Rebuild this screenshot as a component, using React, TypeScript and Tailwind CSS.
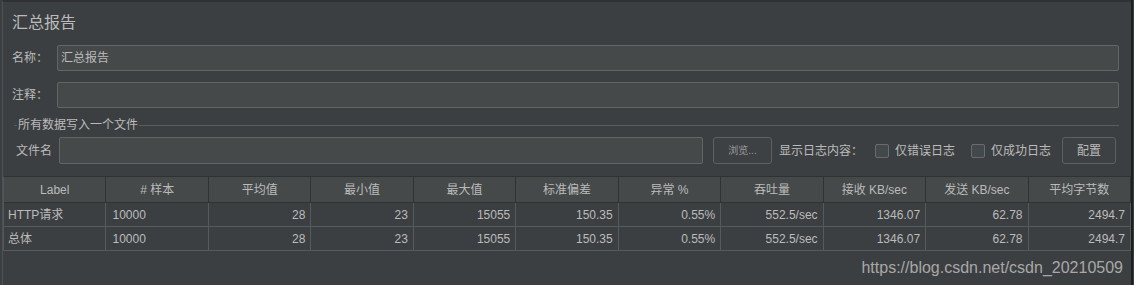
import React from 'react';

const headers = ['Label', '# 样本', '平均值', '最小值', '最大值', '标准偏差', '异常 %', '吞吐量', '接收 KB/sec', '发送 KB/sec', '平均字节数'];

const rows = [
  ['HTTP请求', '10000', '28', '23', '15055', '150.35', '0.55%', '552.5/sec', '1346.07', '62.78', '2494.7'],
  ['总体', '10000', '28', '23', '15055', '150.35', '0.55%', '552.5/sec', '1346.07', '62.78', '2494.7'],
];

function TextRow({ label, value }: { label: string; value?: string }) {
  return (
    <div className="flex h-[26px] items-center pl-[9px] pr-[12px]">
      <span className="w-[45px] shrink-0">{label}</span>
      <div className="flex h-full flex-1 items-center rounded-[2px] border border-[#646464] bg-[#45494a] px-[3px]">
        {value}
      </div>
    </div>
  );
}

function Checkbox() {
  return <span className="block h-[14px] w-[14px] shrink-0 rounded-[2px] border border-[#6b6b6b] bg-[#43494a]" />;
}

export default function App() {
  return (
    <div className="flex h-[285px] w-[1134px] overflow-hidden bg-[#3c3f41] pl-[2px] font-['Liberation_Sans','Noto_Sans_CJK_SC',sans-serif] text-[12px] text-[#bbbbbb]">
      <div className="flex w-[1129px] flex-col border-l border-t-2 border-l-[#4f5254] border-t-[#2f3133] pt-[11px]">
        {/* title */}
        <div className="h-[20px] pl-[9px] text-[16px] leading-[20px]">汇总报告</div>

        <div className="mt-[12px]">
          <TextRow label="名称：" value="汇总报告" />
        </div>
        <div className="mt-[11px]">
          <TextRow label="注释：" />
        </div>

        {/* file section */}
        <div className="ml-[11px] mr-[12px] mt-[10px]">
          <div className="flex h-[14px] items-center">
            <span className="h-px w-[3px] bg-[#5a5d5f]" />
            <span className="mx-[1px] leading-[14px]">所有数据写入一个文件</span>
            <span className="h-px flex-1 bg-[#5a5d5f]" />
          </div>
          <div className="mt-[5px] flex h-[27px] items-center whitespace-nowrap pl-[2px]">
            <span className="w-[43px] shrink-0">文件名</span>
            <div className="h-full w-[644px] rounded-[2px] border border-[#646464] bg-[#45494a]" />
            <div className="ml-[10px] flex h-full w-[59px] items-center justify-center rounded-[3px] border border-[#5e6163] bg-[#3e4143] text-[10px] text-[#999999]">
              浏览...
            </div>
            <span className="ml-[7px] w-[96px]">显示日志内容：</span>
            <Checkbox />
            <span className="ml-[6px] w-[76px]">仅错误日志</span>
            <Checkbox />
            <span className="ml-[6px] w-[71px]">仅成功日志</span>
            <div className="flex h-full w-[54px] items-center justify-center rounded-[3px] border border-[#5e6163] bg-[#3e4143]">
              配置
            </div>
          </div>
        </div>

        {/* table */}
        <div className="mt-[12px] w-[1128px] border-l border-t border-l-[#515658] border-t-[#2f3133]">
          <div className="grid h-[26px] grid-cols-11 bg-[#45494a]">
            {headers.map((h) => (
              <div key={h} className="flex items-center justify-center border-b border-r border-[#303234]">
                {h}
              </div>
            ))}
          </div>
          {rows.map((r, ri) => (
            <div key={ri} className="grid h-[24px] grid-cols-11">
              {r.map((c, ci) => (
                <div
                  key={ci}
                  className={
                    ci === 0
                      ? 'flex items-center border-b border-r border-[#555a5c] pl-[4px]'
                      : ci === 1
                        ? 'flex items-center border-b border-r border-[#555a5c] pl-[6px]'
                        : 'flex items-center justify-end border-b border-r border-[#555a5c] pr-[5px]'
                  }
                >
                  {c}
                </div>
              ))}
            </div>
          ))}
        </div>

        {/* watermark */}
        <div className="mt-[6px] h-[22px] pr-[8px] text-right text-[16px] leading-[22px] text-[#a8a8a8]">
          https://blog.csdn.net/csdn_20210509
        </div>
      </div>
      <div className="w-[2px] shrink-0 bg-[#1e1f20]" />
    </div>
  );
}
